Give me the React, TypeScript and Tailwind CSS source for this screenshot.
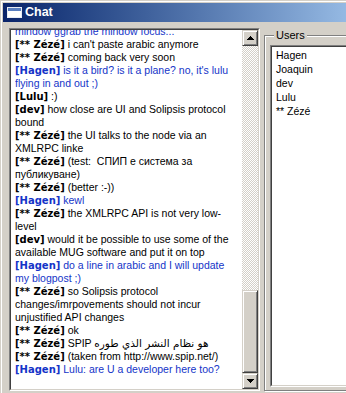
import React from "react";

type Line = { name?: string; text?: string; blue?: boolean; arabic?: string };

const lines: Line[] = [
  { text: "mindow ggrab the mindow focus...", blue: true },
  { name: "[** Zézé]", text: " i can't paste arabic anymore" },
  { name: "[** Zézé]", text: " coming back very soon" },
  { name: "[Hagen]", text: " is it a bird? is it a plane? no, it's lulu", blue: true },
  { text: "flying in and out ;)", blue: true },
  { name: "[Lulu]", text: " :)" },
  { name: "[dev]", text: " how close are UI and Solipsis protocol" },
  { text: "bound" },
  { name: "[** Zézé]", text: " the UI talks to the node via an" },
  { text: "XMLRPC linke" },
  { name: "[** Zézé]", text: " (test:  СПИП е система за" },
  { text: "публикуване)" },
  { name: "[** Zézé]", text: " (better :-))" },
  { name: "[Hagen]", text: " kewl", blue: true },
  { name: "[** Zézé]", text: " the XMLRPC API is not very low-" },
  { text: "level" },
  { name: "[dev]", text: " would it be possible to use some of the" },
  { text: "available MUG software and put it on top" },
  { name: "[Hagen]", text: " do a line in arabic and I will update", blue: true },
  { text: "my blogpost ;)", blue: true },
  { name: "[** Zézé]", text: " so Solipsis protocol" },
  { text: "changes/imrpovements should not incur" },
  { text: "unjustified API changes" },
  { name: "[** Zézé]", text: " ok" },
  { name: "[** Zézé]", text: " SPIP ", arabic: "هو نظام النشر الذي طوره" },
  { name: "[** Zézé]", text: " (taken from http://www.spip.net/)" },
  { name: "[Hagen]", text: " Lulu: are U a developer here too?", blue: true },
];

const users = ["Hagen", "Joaquin", "dev", "Lulu", "** Zézé"];

function Arrow({ up }: { up: boolean }) {
  return (
    <svg width="7" height="4" viewBox="0 0 7 4" shapeRendering="crispEdges">
      {up ? (
        <path d="M3 0h1v1h1v1h1v1h1v1H0V3h1V2h1V1h1z" fill="#000" />
      ) : (
        <path d="M0 0h7v1H6v1H5v1H4v1H3V3H2V2H1V1H0z" fill="#000" />
      )}
    </svg>
  );
}

const btn =
  "flex items-center justify-center bg-[#d4d0c8] border border-t-[#d4d0c8] border-l-[#d4d0c8] border-r-[#404040] border-b-[#404040] shadow-[inset_1px_1px_0_#ffffff,inset_-1px_-1px_0_#808080]";

export default function App() {
  return (
    <div className="w-[346px] h-[393px] overflow-hidden bg-[#d4d0c8] pl-[1px] pt-[1px] font-['Liberation_Sans',Arial,sans-serif]">
      <div className="h-full border-l border-t border-white pl-[1px] pt-[1px]">
        {/* Title bar */}
        <div className="w-[380px] h-[19px] bg-linear-to-r from-[#0a246a] to-[#a6caf0] flex items-center">
          <div className="ml-[4px] w-[15px] h-[11px] bg-white border border-[#e8ecf4] flex flex-col">
            <div className="h-[3px] bg-[#5a7fc0] shrink-0" />
          </div>
          <span className="ml-[3px] text-white font-bold text-[12.5px] leading-[19px] font-['Liberation_Sans',Arial,sans-serif]">
            Chat
          </span>
        </div>

        <div className="flex">
          {/* Chat text area */}
          <div className="ml-[6px] mt-[6px] w-[251px] h-[363px] shrink-0 border border-t-[#808080] border-l-[#808080] border-r-white border-b-white">
            <div className="h-full border border-t-[#404040] border-l-[#404040] border-r-[#d4d0c8] border-b-[#d4d0c8] bg-white flex">
              <div className="flex-1 overflow-hidden pl-[4px]">
                <div className="mt-[-5px]">
                  {lines.map((l, i) => (
                    <div
                      key={i}
                      className={
                        "h-[13px] leading-[13px] whitespace-pre overflow-hidden text-[10.5px] " +
                        (l.blue ? "text-[#1434c8]" : "text-black")
                      }
                    >
                      {l.name && (
                        <span className="font-bold text-[10px] font-['DejaVu_Sans',Verdana,sans-serif]">
                          {l.name}
                        </span>
                      )}
                      {l.text}
                      {l.arabic && (
                        <span className="text-[10.5px] font-['DejaVu_Sans',sans-serif]">{l.arabic}</span>
                      )}
                    </div>
                  ))}
                </div>
              </div>
              {/* Scrollbar */}
              <div className="w-[16px] shrink-0 flex flex-col">
                <div className={btn + " h-[16px] shrink-0"}>
                  <Arrow up />
                </div>
                <div className="flex-1 bg-[image:repeating-conic-gradient(#d4d0c8_0_25%,#ffffff_0_50%)] bg-[length:2px_2px]" />
                <div className={btn + " h-[83px] shrink-0"} />
                <div className={btn + " h-[16px] shrink-0"}>
                  <Arrow up={false} />
                </div>
              </div>
            </div>
          </div>

          {/* Users group box */}
          <div className="relative ml-[4px] mt-[13px] w-[120px] h-[356px] shrink-0 border border-[#808080] shadow-[inset_1px_1px_0_#ffffff,1px_1px_0_#ffffff] pl-[5px] pt-[9px]">
            <span className="absolute top-[-8px] left-[9px] px-[2px] bg-[#d4d0c8] text-[11px] leading-[14px] text-black">
              Users
            </span>
            <div className="h-[342px] border border-t-[#808080] border-l-[#808080] border-r-white border-b-white">
              <div className="h-full border border-t-[#404040] border-l-[#404040] border-r-[#d4d0c8] border-b-[#d4d0c8] bg-white pl-[4px] pt-[1px]">
                {users.map((u) => (
                  <div key={u} className="h-[14px] leading-[14px] text-[10.5px] text-black whitespace-nowrap">
                    {u}
                  </div>
                ))}
              </div>
            </div>
          </div>
        </div>
      </div>
    </div>
  );
}
